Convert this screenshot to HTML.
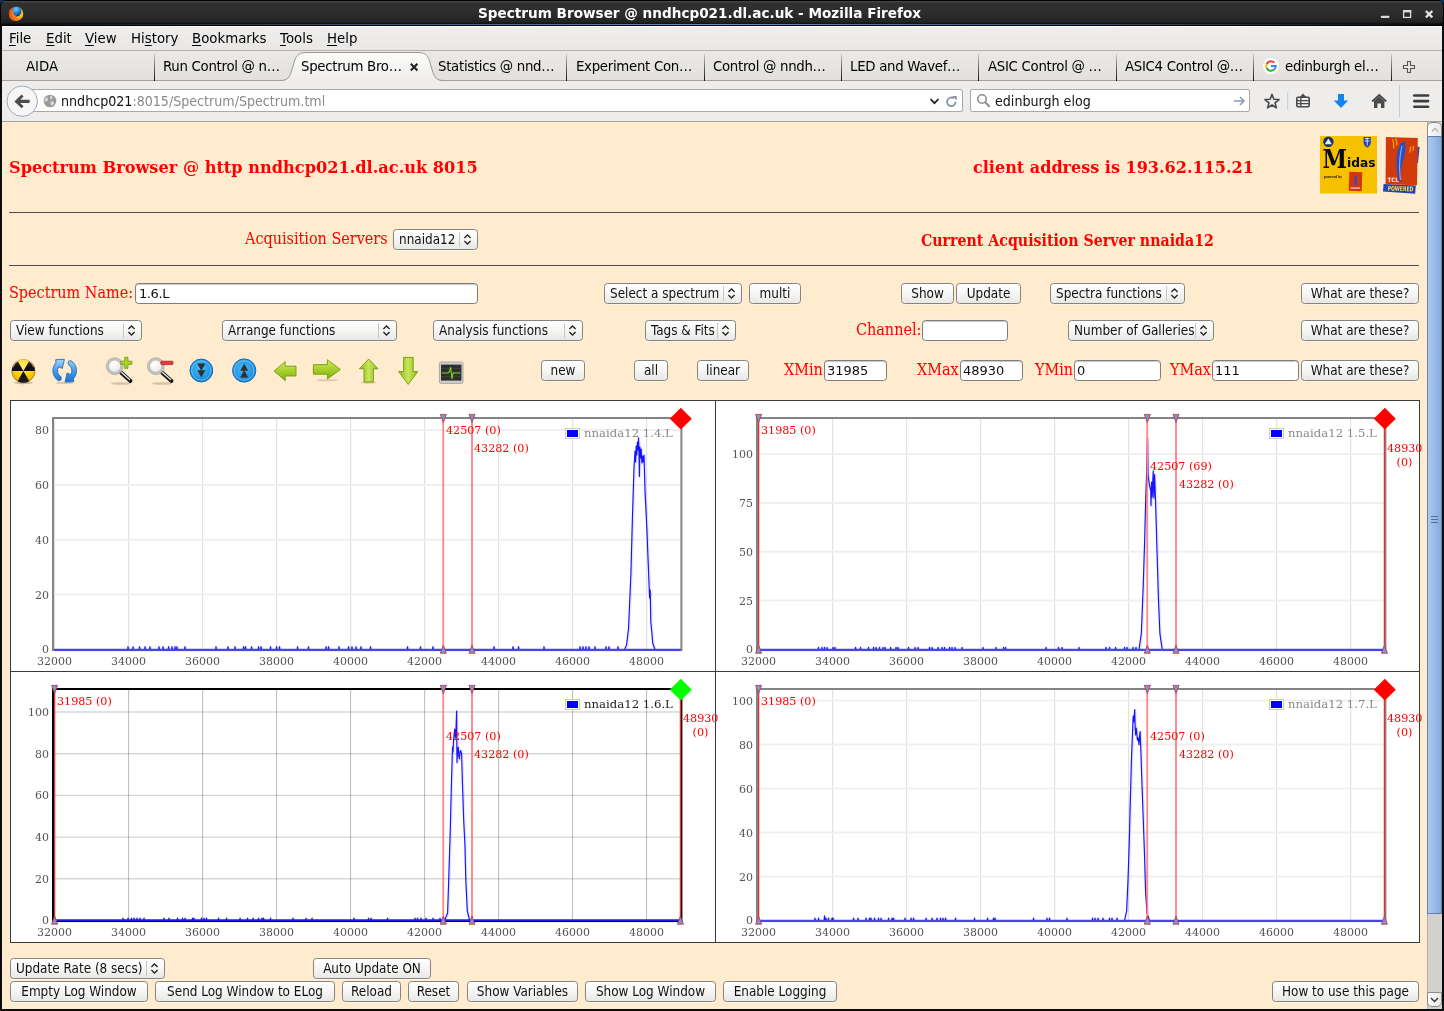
<!DOCTYPE html>
<html lang="en">
<head>
<meta charset="utf-8">
<title>Spectrum Browser @ nndhcp021.dl.ac.uk - Mozilla Firefox</title>
<style>
*{box-sizing:border-box;margin:0;padding:0}
html,body{width:1444px;height:1011px;overflow:hidden;background:#0d355f}
body{font-family:"DejaVu Sans","Liberation Sans",sans-serif;font-size:13.33px;color:#000;position:relative}
#win{position:absolute;left:0;top:0;width:1444px;height:1011px;background:#000;border-radius:6px 6px 0 0;overflow:hidden;will-change:transform}
#win *{position:absolute;white-space:nowrap}
#win u, #win b, #win i{position:static}
#titlebar{left:0;top:0;width:1444px;height:26px;background:linear-gradient(#000 0,#000 3%,#474747 5%,#303030 12%,#2e2e2e 50%,#222 85%,#0a0a0a 94%,#000 100%);border-radius:6px 6px 0 0;border-left:1px solid #000;border-right:1px solid #000}
#title{left:477px;top:4px;color:#fff;font-weight:bold;font-size:13.6px;line-height:18px}
#menubar{left:2px;top:26px;width:1440px;height:25px;background:linear-gradient(#efeeed,#e8e7e5);border-bottom:1px solid #b4b1ac;border-top:1px solid #f9f9f8}
.mi{top:3px;font-size:13.33px;line-height:18px}
.mi u{text-decoration:underline;text-underline-offset:1.5px}
#tabbar{left:2px;top:51px;width:1440px;height:30px;background:linear-gradient(#eae9e7,#e3e1de);border-bottom:1px solid #a5a29d}
.tab{top:7px;font-size:13.33px;line-height:18px;letter-spacing:-0.3px}
.tsep{top:3px;width:1px;height:27px;background:linear-gradient(#cfcdc9 0,#777 40%,#111 100%)}
#navbar{left:2px;top:81px;width:1440px;height:41px;background:#eeedec;border-bottom:1px solid #a5a29d}
.ubox{top:8px;height:23px;background:#fff;border:1px solid #a9a9a9;border-radius:2px}
.utxt{font-family:"DejaVu Sans Condensed","DejaVu Sans","Liberation Sans",sans-serif;font-size:14.1px;line-height:21px;top:1px}

#content{left:2px;top:122px;width:1425px;height:887px;background:#ffebcd}
.pf{font-family:"DejaVu Serif Condensed","DejaVu Serif","Liberation Serif",serif;color:#f00;font-size:16px;line-height:20px}
.pb{font-family:"DejaVu Serif","Liberation Serif",serif;color:#f00;font-size:16px;line-height:20px;font-weight:bold}
.ui{font-family:"DejaVu Sans Condensed","DejaVu Sans","Liberation Sans",sans-serif;font-size:13.4px;line-height:19px;color:#111}
.btn{height:21px;border:1px solid #86847f;border-radius:3.5px;background:linear-gradient(#ffffff 0,#f7f7f6 45%,#e9e8e6 100%);text-align:center;box-shadow:0 1px 0 rgba(255,255,255,.5)}
.sel{height:21px;border:1px solid #86847f;border-radius:3.5px;background:linear-gradient(#ffffff 0,#f7f7f6 45%,#e9e8e6 100%);padding-left:5px;box-shadow:0 1px 0 rgba(255,255,255,.5)}
.sel .sp{right:17px;top:2px;width:1px;height:15px;background:#c9c7c3}
.sel svg{right:4px;top:3px}
.inp{height:21px;border:1px solid #7f7d79;border-radius:3.5px;background:#fff;padding-left:2px;box-shadow:inset 0 1px 1px #c8c8c8;font-family:'DejaVu Sans','Liberation Sans',sans-serif !important;font-size:13px !important}
.hr{left:9px;width:1410px;height:1px;background:#4a4e57}

.tk{font-family:"DejaVu Serif","Liberation Serif",serif;font-size:11px;line-height:13px;color:#545454}
.ml{font-family:"DejaVu Serif","Liberation Serif",serif;font-size:11.15px;line-height:13px;color:#f00}
.lg{font-family:"DejaVu Serif","Liberation Serif",serif;font-size:11.7px;line-height:14px;color:#8a8a8a}
</style>
</head>
<body>
<div id="win">
<div id="titlebar"><div id="title">Spectrum Browser @ nndhcp021.dl.ac.uk - Mozilla Firefox</div>
<svg style="left:6.500px;top:6px" width="16" height="16" viewBox="0 0 16 16">
<defs><radialGradient id="fxg" cx="0.78" cy="0.42" r="0.85"><stop offset="0" stop-color="#fff36a"/><stop offset="0.250" stop-color="#ffc21a"/><stop offset="0.550" stop-color="#f58220"/><stop offset="1" stop-color="#dc3b12"/></radialGradient>
<radialGradient id="fxb" cx="0.45" cy="0.25" r="0.75"><stop offset="0" stop-color="#6fd0ff"/><stop offset="0.500" stop-color="#1d86d8"/><stop offset="1" stop-color="#122a80"/></radialGradient></defs>
<circle cx="8.050" cy="7.900" r="7.200" fill="url(#fxg)"/>
<circle cx="8.500" cy="5.700" r="5" fill="url(#fxb)"/>
<path d="M0.900 7.600 C0.900 5.200 1.400 3.600 2.200 2.600 L2.700 3.800 L3.800 3.200 L4.200 4.200 L5.600 3.900 C4.900 4.500 4.800 5.200 5.200 5.700 L6.800 5.700 C6 6.300 5.200 6.900 5.400 7.700 C5.800 8.900 7.200 8.900 8.600 8.600 C8 9.600 6.800 9.900 5.800 9.600 C6.800 11 9 11.200 10.800 10.200 C12.400 9.200 13.300 7.600 13.200 5.800 C14 7.400 13.800 9.600 12.800 11.400 C11 14.400 7.400 15.600 4.400 14.200 C2 13 0.900 10.400 0.900 7.600Z" fill="url(#fxg)"/>
</svg>
<svg style="left:1377px;top:6px" width="60" height="16" viewBox="0 0 60 16">
<rect x="3" y="9.700" width="8.300" height="2.400" rx="0.600" fill="#dcdcdc"/>
<rect x="25.600" y="4.700" width="7" height="6.700" fill="none" stroke="#dcdcdc" stroke-width="1.300"/><rect x="25" y="4.100" width="8.200" height="2.300" fill="#dcdcdc"/>
<path d="M47.900 5 L54.300 11.400 M54.300 5 L47.900 11.400" stroke="#e2e2e2" stroke-width="2.300" stroke-linecap="butt"/>
</svg>
<div style="left:1px;top:23.500px;width:1440px;height:1.500px;background:linear-gradient(90deg,rgba(106,143,192,0) 0,rgba(106,143,192,.55) 25%,#6a8fc0 50%,rgba(106,143,192,.55) 75%,rgba(106,143,192,0) 100%)"></div>
</div>
<div id="menubar">
<span class="mi" style="left:7px"><u>F</u>ile</span>
<span class="mi" style="left:44px"><u>E</u>dit</span>
<span class="mi" style="left:83px"><u>V</u>iew</span>
<span class="mi" style="left:129px">Hi<u>s</u>tory</span>
<span class="mi" style="left:190px"><u>B</u>ookmarks</span>
<span class="mi" style="left:278px"><u>T</u>ools</span>
<span class="mi" style="left:325px"><u>H</u>elp</span>
</div>
<div id="tabbar">
<span class="tab" style="left:24px;letter-spacing:0">AIDA</span>
<span class="tab" style="left:161px">Run Control @ n…</span>
<span class="tab" style="left:299px">Spectrum Bro…</span>
<span class="tab" style="left:436px">Statistics @ nnd…</span>
<span class="tab" style="left:574px">Experiment Con…</span>
<span class="tab" style="left:711px">Control @ nndh…</span>
<span class="tab" style="left:848px">LED and Wavef…</span>
<span class="tab" style="left:986px">ASIC Control @ …</span>
<span class="tab" style="left:1123px">ASIC4 Control @…</span>
<span class="tab" style="left:1283px">edinburgh el…</span>
<div class="tsep" style="left:152px"></div>
<div class="tsep" style="left:564px"></div>
<div class="tsep" style="left:702px"></div>
<div class="tsep" style="left:839px"></div>
<div class="tsep" style="left:976px"></div>
<div class="tsep" style="left:1114px"></div>
<div class="tsep" style="left:1251px"></div>
<div class="tsep" style="left:1389px"></div>
<svg style="left:278px;top:0" width="164" height="31" viewBox="0 0 164 31">
<defs><linearGradient id="tg" x1="0" y1="0" x2="0" y2="1"><stop offset="0" stop-color="#fbfbfa"/><stop offset="1" stop-color="#eeedec"/></linearGradient></defs>
<path d="M0 30 C8 30 9.500 26 11.500 20 L14.500 10 C16.500 3.500 20 1.500 26 1.500 L138 1.500 C144 1.500 147.500 3.500 149.500 10 L152.500 20 C154.500 26 156 30 164 30 L164 31 L0 31Z" fill="url(#tg)"/>
<path d="M0 29.500 C8 29.500 9.500 26 11.500 20 L14.500 10 C16.500 3.500 20 1.500 26 1.500 L138 1.500 C144 1.500 147.500 3.500 149.500 10 L152.500 20 C154.500 26 156 29.500 164 29.500" fill="none" stroke="#9b9995" stroke-width="1"/>
</svg>
<span class="tab" style="left:299px">Spectrum Bro…</span>
<svg style="left:407px;top:11px" width="10" height="10" viewBox="0 0 10 10"><path d="M1.800 1.800 L8.400 8.400 M8.400 1.800 L1.800 8.400" stroke="#222" stroke-width="2.100"/></svg>
<svg style="left:1261px;top:7px" width="16" height="16" viewBox="0 0 16 16"><circle cx="8" cy="8" r="8" fill="#fff"/>
<path d="M8 3.2 A4.8 4.8 0 0 0 3.7 6 " fill="none" stroke="#ea4335" stroke-width="2"/>
<path d="M3.7 6 A4.8 4.8 0 0 0 3.7 10" fill="none" stroke="#fbbc05" stroke-width="2"/>
<path d="M3.7 10 A4.8 4.8 0 0 0 11.2 11.6" fill="none" stroke="#34a853" stroke-width="2"/>
<path d="M11.2 11.6 A4.8 4.8 0 0 0 12.8 8 L8 8" fill="none" stroke="#4285f4" stroke-width="2"/>
<path d="M8 3.2 A4.8 4.8 0 0 1 11.4 4.6" fill="none" stroke="#ea4335" stroke-width="2"/></svg>
<svg style="left:1400px;top:9px" width="14" height="14" viewBox="0 0 14 14"><path d="M5.5 1.5 h3 v4 h4 v3 h-4 v4 h-3 v-4 h-4 v-3 h4z" fill="#e9e8e6" stroke="#555" stroke-width="1.1"/></svg>
</div>
<div id="navbar">
<div class="ubox" style="left:22px;width:939px"><span class="utxt" style="left:36px;color:#111">nndhcp021<span style="position:static;color:#8a8a8a">:8015/Spectrum/Spectrum.tml</span></span>
<svg style="left:18px;top:4px" width="14" height="14" viewBox="0 0 14 14"><circle cx="7" cy="7" r="6.3" fill="#9a9a9a"/><path d="M3 3.5 C4.5 3 5.5 4.5 5 6 C4.5 7.5 3 7 2 8 C1.2 6.5 1.6 4.6 3 3.5Z M7.5 1.5 C9.5 2 10 4 9 5 C8 5.6 7 4.6 7 3.4Z M8 7.5 C9.6 7 11.4 8 11 9.6 C10.4 11 9 12 8 11 C7.4 10 7.2 8.4 8 7.5Z" fill="#d7d7d7"/></svg>
<svg style="left:903px;top:5px" width="32" height="13" viewBox="0 0 32 13"><path d="M2.5 4 L6.5 8.2 L10.5 4" fill="none" stroke="#222" stroke-width="1.8"/>
<path d="M27.6 6.8 A4.3 4.3 0 1 1 25.6 3.2" fill="none" stroke="#8393a5" stroke-width="1.8"/><path d="M24.2 1 L28.6 1 L28.6 5.4Z" fill="#8393a5"/></svg>
</div>
<svg style="left:4px;top:4px" width="33" height="33" viewBox="0 0 33 33"><circle cx="16.2" cy="16.2" r="15.2" fill="#f6f6f6" stroke="#9aa8bd" stroke-width="1"/>
<path d="M8.4 16.4 L15.6 9.6 L17.6 11.6 L14.2 14.8 L23.6 14.8 L23.6 18 L14.2 18 L17.6 21.2 L15.6 23.2Z" fill="#4d4d4d"/></svg>
<div class="ubox" style="left:968px;width:280px"><span class="utxt" style="left:24px;color:#111">edinburgh elog</span>
<svg style="left:5px;top:3px" width="16" height="16" viewBox="0 0 16 16"><circle cx="6" cy="6" r="4.2" fill="none" stroke="#8d8d8d" stroke-width="1.6"/><path d="M9.2 9.2 L13.6 13.8" stroke="#8d8d8d" stroke-width="2"/></svg>
<svg style="left:262px;top:5px" width="13" height="12" viewBox="0 0 13 12"><path d="M1 6 H11 M7 2 L11 6 L7 10" fill="none" stroke="#8b9bb0" stroke-width="1.6"/></svg>
</div>
<svg style="left:1258px;top:8px;overflow:visible" width="180" height="26" viewBox="0 0 180 26">
<path d="M12.00 5.40 L13.88 10.21 L19.04 10.51 L15.04 13.79 L16.35 18.79 L12.00 16.00 L7.65 18.79 L8.96 13.79 L4.96 10.51 L10.12 10.21Z" fill="none" stroke="#4a4a4a" stroke-width="1.600" stroke-linejoin="round"/>
<rect x="27.2" y="3" width="1" height="18" fill="#c4cbd6"/>
<path d="M38 8.300 h10 a1.200 1.200 0 0 1 1.200 1.200 v7 a1.200 1.200 0 0 1 -1.200 1.200 h-10 a1.200 1.200 0 0 1 -1.200 -1.200 v-7 a1.200 1.200 0 0 1 1.200 -1.200z" fill="none" stroke="#4a4a4a" stroke-width="1.600"/>
<path d="M39.800 8 L43 4.600 L46.200 8Z" fill="#4a4a4a"/><path d="M37 11.600 H49 M37 14.700 H49 M40.800 9 V17.600" stroke="#4a4a4a" stroke-width="1.300"/>
<path d="M78 5.100 h6 v6.400 h4.200 L81 18.900 L73.800 11.500 h4.200z" fill="#1483f0"/>
<path d="M112.200 12.400 L119.200 6 L126.200 12.400" fill="none" stroke="#4a4a4a" stroke-width="2"/><path d="M114 12.200 L119.200 7.600 L124.400 12.200 V18.900 H121 V14.400 H117.400 V18.900 H114Z" fill="#4a4a4a"/>
<rect x="139" y="-4" width="1" height="32" fill="#c4cbd6"/>
<rect x="153" y="5.200" width="16.400" height="2.600" rx="1.300" fill="#3d3d3d"/><rect x="153" y="10.800" width="16.400" height="2.600" rx="1.300" fill="#3d3d3d"/><rect x="153" y="16.400" width="16.400" height="2.600" rx="1.300" fill="#3d3d3d"/>
</svg>
</div>
<div id="content"></div>
<span class="pb" style="left:9px;top:158px;font-size:16.17px">Spectrum Browser @ http nndhcp021.dl.ac.uk 8015</span>
<span class="pb" style="left:973px;top:158px;font-size:16.05px">client address is 193.62.115.21</span>
<div class="hr" style="top:212px"></div>
<span class="pf" style="left:245px;top:229px;">Acquisition Servers</span>
<div class="sel ui" style="left:393px;top:229px;width:85px">nnaida12<div class="sp"></div><svg width="11" height="13" viewBox="0 0 11 13"><path d="M2.4 5 L5.5 2 L8.600 5 M2.4 8 L5.5 11 L8.600 8" fill="none" stroke="#222" stroke-width="1.3"/></svg></div>
<span class="pb" style="left:921px;top:230.5px;font-family:'DejaVu Serif Condensed','DejaVu Serif',serif;font-size:15.75px">Current Acquisition Server nnaida12</span>
<div class="hr" style="top:265px"></div>
<span class="pf" style="left:9px;top:283px;">Spectrum Name:</span>
<div class="inp ui" style="left:135px;top:283px;width:343px"><span style="position:static;letter-spacing:-0.4px;padding-left:1px">1.6.L</span></div>
<div class="sel ui" style="left:604px;top:283px;width:138px">Select a spectrum<div class="sp"></div><svg width="11" height="13" viewBox="0 0 11 13"><path d="M2.4 5 L5.5 2 L8.600 5 M2.4 8 L5.5 11 L8.600 8" fill="none" stroke="#222" stroke-width="1.3"/></svg></div>
<div class="btn ui" style="left:749px;top:283px;width:52px">multi</div>
<div class="btn ui" style="left:901px;top:283px;width:53px">Show</div>
<div class="btn ui" style="left:956px;top:283px;width:65px">Update</div>
<div class="sel ui" style="left:1050px;top:283px;width:135px">Spectra functions<div class="sp"></div><svg width="11" height="13" viewBox="0 0 11 13"><path d="M2.4 5 L5.5 2 L8.600 5 M2.4 8 L5.5 11 L8.600 8" fill="none" stroke="#222" stroke-width="1.3"/></svg></div>
<div class="btn ui" style="left:1301px;top:283px;width:118px">What are these?</div>
<div class="sel ui" style="left:10px;top:320px;width:132px">View functions<div class="sp"></div><svg width="11" height="13" viewBox="0 0 11 13"><path d="M2.4 5 L5.5 2 L8.600 5 M2.4 8 L5.5 11 L8.600 8" fill="none" stroke="#222" stroke-width="1.3"/></svg></div>
<div class="sel ui" style="left:222px;top:320px;width:175px">Arrange functions<div class="sp"></div><svg width="11" height="13" viewBox="0 0 11 13"><path d="M2.4 5 L5.5 2 L8.600 5 M2.4 8 L5.5 11 L8.600 8" fill="none" stroke="#222" stroke-width="1.3"/></svg></div>
<div class="sel ui" style="left:433px;top:320px;width:150px">Analysis functions<div class="sp"></div><svg width="11" height="13" viewBox="0 0 11 13"><path d="M2.4 5 L5.5 2 L8.600 5 M2.4 8 L5.5 11 L8.600 8" fill="none" stroke="#222" stroke-width="1.3"/></svg></div>
<div class="sel ui" style="left:645px;top:320px;width:91px">Tags &amp; Fits<div class="sp"></div><svg width="11" height="13" viewBox="0 0 11 13"><path d="M2.4 5 L5.5 2 L8.600 5 M2.4 8 L5.5 11 L8.600 8" fill="none" stroke="#222" stroke-width="1.3"/></svg></div>
<span class="pf" style="left:856px;top:320px;">Channel:</span>
<div class="inp ui" style="left:922px;top:320px;width:86px"></div>
<div class="sel ui" style="left:1068px;top:320px;width:146px">Number of Galleries<div class="sp"></div><svg width="11" height="13" viewBox="0 0 11 13"><path d="M2.4 5 L5.5 2 L8.600 5 M2.4 8 L5.5 11 L8.600 8" fill="none" stroke="#222" stroke-width="1.3"/></svg></div>
<div class="btn ui" style="left:1301px;top:320px;width:118px">What are these?</div>
<div class="btn ui" style="left:541px;top:360px;width:44px">new</div>
<div class="btn ui" style="left:634px;top:360px;width:34px">all</div>
<div class="btn ui" style="left:697px;top:360px;width:52px">linear</div>
<span class="pf" style="left:784px;top:360px;">XMin</span>
<div class="inp ui" style="left:824px;top:360px;width:63px">31985</div>
<span class="pf" style="left:917px;top:360px;">XMax</span>
<div class="inp ui" style="left:960px;top:360px;width:63px">48930</div>
<span class="pf" style="left:1035px;top:360px;">YMin</span>
<div class="inp ui" style="left:1074px;top:360px;width:87px">0</div>
<span class="pf" style="left:1170px;top:360px;">YMax</span>
<div class="inp ui" style="left:1212px;top:360px;width:87px">111</div>
<div class="btn ui" style="left:1301px;top:360px;width:118px">What are these?</div>
<div class="sel ui" style="left:10px;top:958px;width:155px">Update Rate (8 secs)<div class="sp"></div><svg width="11" height="13" viewBox="0 0 11 13"><path d="M2.4 5 L5.5 2 L8.600 5 M2.4 8 L5.5 11 L8.600 8" fill="none" stroke="#222" stroke-width="1.3"/></svg></div>
<div class="btn ui" style="left:313px;top:958px;width:118px">Auto Update ON</div>
<div class="btn ui" style="left:10px;top:981px;width:138px">Empty Log Window</div>
<div class="btn ui" style="left:155px;top:981px;width:180px">Send Log Window to ELog</div>
<div class="btn ui" style="left:342px;top:981px;width:59px">Reload</div>
<div class="btn ui" style="left:408px;top:981px;width:51px">Reset</div>
<div class="btn ui" style="left:467px;top:981px;width:111px">Show Variables</div>
<div class="btn ui" style="left:585px;top:981px;width:131px">Show Log Window</div>
<div class="btn ui" style="left:723px;top:981px;width:114px">Enable Logging</div>
<div class="btn ui" style="left:1272px;top:981px;width:147px">How to use this page</div>
<div style="left:1427px;top:122px;width:15px;height:887px;background:#d4d2ce;border-left:1px solid #b0aeaa"></div>
<div style="left:1427px;top:122px;width:15px;height:15px;background:linear-gradient(90deg,#fdfdfd,#e9e8e6);border:1px solid #8f8d89;border-radius:5px 5px 0 0"><svg style="left:3px;top:4px" width="8" height="6" viewBox="0 0 8 6"><path d="M0.800 4.600 L4 1.400 L7.200 4.600" fill="none" stroke="#aaa" stroke-width="1.100"/></svg></div>
<div style="left:1427px;top:136px;width:15px;height:778px;background:linear-gradient(90deg,#b4cdf0 0,#a6c3ea 12%,#9cbbe5 50%,#86a9da 100%);border:1px solid #5b80b8"><svg style="left:3px;top:378px" width="7" height="9" viewBox="0 0 7 9"><path d="M0 1.500 H7 M0 4.500 H7 M0 7.500 H7" stroke="#4a6fa8" stroke-width="1"/></svg></div>
<div style="left:1427px;top:992px;width:15px;height:15px;background:linear-gradient(90deg,#fdfdfd,#e9e8e6);border:1px solid #8f8d89;border-radius:0 0 5px 5px"><svg style="left:2px;top:4px" width="9" height="6" viewBox="0 0 9 6"><path d="M1 1 L4.500 4.500 L8 1" fill="none" stroke="#333" stroke-width="1.400"/></svg></div>
<svg style="left:8px;top:355px" width="460" height="32" viewBox="8 355 460 32">
<defs>
<linearGradient id="radK" gradientUnits="userSpaceOnUse" x1="0" y1="359" x2="0" y2="383"><stop offset="0" stop-color="#3a3a3a"/><stop offset="0.350" stop-color="#0c0c0c"/><stop offset="1" stop-color="#1c1c1c"/></linearGradient>
<radialGradient id="radY" cx="0.5" cy="0.3" r="0.8"><stop offset="0" stop-color="#fff27a"/><stop offset="0.5" stop-color="#ffd400"/><stop offset="1" stop-color="#d89a00"/></radialGradient>
<linearGradient id="blu" gradientUnits="userSpaceOnUse" x1="0" y1="359" x2="0" y2="383"><stop offset="0" stop-color="#a8d6f7"/><stop offset="0.450" stop-color="#4fa0e6"/><stop offset="1" stop-color="#156ccc"/></linearGradient>
<radialGradient id="bluc" cx="0.45" cy="0.4" r="0.7"><stop offset="0" stop-color="#4fb8f2"/><stop offset="0.700" stop-color="#1a93e4"/><stop offset="1" stop-color="#1277cc"/></radialGradient>
<linearGradient id="grn" x1="0" y1="0" x2="0" y2="1"><stop offset="0" stop-color="#d3ea6a"/><stop offset="0.5" stop-color="#a6cf2c"/><stop offset="1" stop-color="#7fb20e"/></linearGradient>
<linearGradient id="grnh" x1="0" y1="0" x2="1" y2="0"><stop offset="0" stop-color="#8cbc14"/><stop offset="0.5" stop-color="#c9e45c"/><stop offset="1" stop-color="#8cbc14"/></linearGradient>
<radialGradient id="lens" cx="0.4" cy="0.35" r="0.7"><stop offset="0" stop-color="#ffffff"/><stop offset="0.7" stop-color="#f1ecec"/><stop offset="1" stop-color="#d9d4d4"/></radialGradient>
</defs>
<!-- radiation -->
<ellipse cx="23.400" cy="382.800" rx="9.500" ry="1.500" fill="rgba(90,70,40,.3)"/>
<circle cx="23.4" cy="371.1" r="11.6" fill="url(#radY)"/>
<path d="M23.4 371.1 L29.20 361.05 A11.6 11.6 0 0 1 35.00 371.10Z" fill="url(#radK)"/>
<path d="M23.4 371.1 L11.80 371.10 A11.6 11.6 0 0 1 17.60 361.05Z" fill="url(#radK)"/>
<path d="M23.4 371.1 L29.20 381.15 A11.6 11.6 0 0 1 17.60 381.15Z" fill="url(#radK)"/>
<circle cx="23.4" cy="371.1" r="11.6" fill="none" stroke="rgba(60,40,0,.55)" stroke-width="0.700"/>
<path d="M13.06 367.34 A11.0 11.0 0 0 1 33.74 367.34" fill="none" stroke="rgba(255,235,200,.7)" stroke-width="0.900"/>
<!-- refresh -->
<ellipse cx="65" cy="382.900" rx="9" ry="1.200" fill="rgba(90,70,40,.22)"/>
<path d="M60.84 380.25 L58.45 380.71 A11.8 11.8 0 0 1 55.93 362.80 L55.70 359.70 L64.40 359.30 L62.30 368.40 L58.66 366.78 A7.2 7.2 0 0 0 61.32 377.06Z" fill="url(#blu)" stroke="#1f6fc6" stroke-width="0.900" stroke-linejoin="round"/>
<path d="M68.56 361.15 L70.95 360.69 A11.8 11.8 0 0 1 73.47 378.60 L73.70 381.70 L65.00 382.10 L67.10 373.00 L70.74 374.62 A7.2 7.2 0 0 0 68.08 364.34Z" fill="url(#blu)" stroke="#1f6fc6" stroke-width="0.900" stroke-linejoin="round"/>
<!-- zoom in -->
<ellipse cx="121" cy="383.500" rx="10" ry="1.300" fill="rgba(90,70,40,.25)"/>
<path d="M121 372.500 L130.500 381" stroke="#151515" stroke-width="3.800" stroke-linecap="round"/><path d="M121.600 372.400 L129.600 379.600" stroke="#e8e8e8" stroke-width="1.300" stroke-linecap="round"/>
<circle cx="114.700" cy="366.200" r="7.300" fill="url(#lens)" stroke="#c2c2c2" stroke-width="2.400"/>
<circle cx="114.700" cy="366.200" r="8.500" fill="none" stroke="#9a9a9a" stroke-width="0.500"/><circle cx="114.700" cy="366.200" r="6.100" fill="none" stroke="#a8a8a8" stroke-width="0.500"/>
<path d="M124.700 357.200 h3.200 v4 h4 v3.200 h-4 v4 h-3.200 v-4 h-4 v-3.200 h4z" fill="#a9d326" stroke="#6c9c0c" stroke-width="0.800"/>
<!-- zoom out -->
<ellipse cx="162" cy="383.500" rx="10" ry="1.300" fill="rgba(90,70,40,.25)"/>
<path d="M162 372.500 L171.500 381" stroke="#151515" stroke-width="3.800" stroke-linecap="round"/><path d="M162.600 372.400 L170.600 379.600" stroke="#e8e8e8" stroke-width="1.300" stroke-linecap="round"/>
<circle cx="155.800" cy="366.200" r="7.300" fill="url(#lens)" stroke="#c2c2c2" stroke-width="2.400"/>
<circle cx="155.800" cy="366.200" r="8.500" fill="none" stroke="#9a9a9a" stroke-width="0.500"/><circle cx="155.800" cy="366.200" r="6.100" fill="none" stroke="#a8a8a8" stroke-width="0.500"/>
<rect x="160.800" y="361.200" width="12.200" height="3.400" rx="0.800" fill="#e0393e" stroke="#b01c22" stroke-width="0.700"/>
<!-- blue down -->
<circle cx="201.300" cy="370.500" r="11.400" fill="url(#bluc)" stroke="#1767b4" stroke-width="1"/>
<circle cx="201.300" cy="370.500" r="9.600" fill="none" stroke="rgba(200,235,255,.45)" stroke-width="0.900"/>
<path d="M197.300 363.600 h8 L201.300 371Z M197.300 370.200 h8 L201.300 377.600Z" fill="#303030"/>
<!-- blue up -->
<circle cx="244.200" cy="370.500" r="11.600" fill="url(#bluc)" stroke="#1767b4" stroke-width="1"/>
<circle cx="244.200" cy="370.500" r="9.800" fill="none" stroke="rgba(200,235,255,.45)" stroke-width="0.900"/>
<path d="M240.200 370.800 h8 L244.200 363.400Z M240.200 377.400 h8 L244.200 370Z" fill="#303030"/>
<!-- left arrow -->
<path d="M274 371 L285.200 361.600 L285.200 366.200 L296 366.200 L296 376 L285.200 376 L285.200 380.600Z" fill="url(#grn)" stroke="#6f9c0c" stroke-width="0.900" stroke-linejoin="round"/>
<!-- right arrow -->
<ellipse cx="327" cy="380.300" rx="11" ry="1" fill="rgba(90,70,40,.2)"/>
<path d="M340.400 369.400 L327.400 359.800 L327.400 364.600 L313.400 364.600 L313.400 374.200 L327.400 374.200 L327.400 379Z" fill="url(#grn)" stroke="#6f9c0c" stroke-width="0.900" stroke-linejoin="round"/>
<!-- up arrow -->
<ellipse cx="368.700" cy="382.600" rx="8" ry="1" fill="rgba(90,70,40,.25)"/>
<path d="M368.700 359 L378 368.800 L373.400 368.800 L373.400 382 L364 382 L364 368.800 L359.400 368.800Z" fill="url(#grnh)" stroke="#6f9c0c" stroke-width="0.900" stroke-linejoin="round"/>
<!-- down arrow -->
<path d="M408.200 384.400 L417.800 371.600 L413.200 371.600 L413.200 357.400 L403.600 357.400 L403.600 371.600 L398.600 371.600Z" fill="url(#grnh)" stroke="#6f9c0c" stroke-width="0.900" stroke-linejoin="round"/>
<!-- monitor -->
<rect x="439.400" y="362" width="23.600" height="21.400" rx="1.500" fill="#cfcfcf" stroke="#9c9c9c" stroke-width="0.800"/>
<rect x="441" y="364.600" width="20.400" height="16" fill="#2e2e2e"/>
<path d="M441 368.600 H461.400 M441 372.600 H461.400 M441 376.600 H461.400" stroke="#4a4a4a" stroke-width="0.600"/>
<path d="M442 373 H448 L449.600 371.400 L450.600 367 L452 379 L453 373 H460.400" fill="none" stroke="#7ed321" stroke-width="1.100"/>
</svg>
<div style="left:10px;top:400px;width:1410px;height:543px;background:#fff;border:1px solid #3a3a3a"></div>
<div style="left:715px;top:400px;width:1px;height:543px;background:#3a3a3a"></div>
<div style="left:10px;top:671px;width:1410px;height:1px;background:#3a3a3a"></div>
<svg style="left:11px;top:401px" width="703" height="269" viewBox="11 401 703 269">
<path d="M54.6 419 V649" stroke="#e2e2e2" stroke-width="1.2"/>
<path d="M128.6 419 V649" stroke="#e2e2e2" stroke-width="1.2"/>
<path d="M202.6 419 V649" stroke="#e2e2e2" stroke-width="1.2"/>
<path d="M276.6 419 V649" stroke="#e2e2e2" stroke-width="1.2"/>
<path d="M350.6 419 V649" stroke="#e2e2e2" stroke-width="1.2"/>
<path d="M424.6 419 V649" stroke="#e2e2e2" stroke-width="1.2"/>
<path d="M498.6 419 V649" stroke="#e2e2e2" stroke-width="1.2"/>
<path d="M572.6 419 V649" stroke="#e2e2e2" stroke-width="1.2"/>
<path d="M646.6 419 V649" stroke="#e2e2e2" stroke-width="1.2"/>
<path d="M54 594.6 H680.4" stroke="#efefef" stroke-width="2"/>
<path d="M54 539.8 H680.4" stroke="#efefef" stroke-width="2"/>
<path d="M54 484.9 H680.4" stroke="#efefef" stroke-width="2"/>
<path d="M54 430.1 H680.4" stroke="#efefef" stroke-width="2"/>
<rect x="53" y="418" width="628.4" height="232" fill="none" stroke="#848484" stroke-width="2"/>
<path d="M54 649.5 L127.6 649.5 L128.0 646.7 L128.4 649.5 L132.6 649.5 L133.0 646.7 L133.4 649.5 L139.1 649.5 L139.5 646.7 L139.9 649.5 L144.6 649.5 L145.0 646.7 L145.4 649.5 L149.6 649.5 L150.0 646.7 L150.4 649.5 L158.6 649.5 L159.0 646.7 L159.4 649.5 L162.6 649.5 L163.0 646.7 L163.4 649.5 L168.1 649.5 L168.5 646.7 L168.9 649.5 L171.6 649.5 L172.0 646.7 L172.4 649.5 L174.6 649.5 L175.0 646.7 L175.4 649.5 L176.6 649.5 L177.0 646.7 L177.4 649.5 L184.6 649.5 L185.0 646.7 L185.4 649.5 L215.6 649.5 L216.0 646.7 L216.4 649.5 L227.6 649.5 L228.0 646.7 L228.4 649.5 L234.6 649.5 L235.0 646.7 L235.4 649.5 L243.1 649.5 L243.5 646.7 L243.9 649.5 L245.1 649.5 L245.5 646.7 L245.9 649.5 L251.1 649.5 L251.5 646.7 L251.9 649.5 L258.1 649.5 L258.5 646.7 L258.9 649.5 L260.6 649.5 L261.0 646.7 L261.4 649.5 L270.1 649.5 L270.5 646.7 L270.9 649.5 L276.1 649.5 L276.5 646.7 L276.9 649.5 L279.1 649.5 L279.5 646.7 L279.9 649.5 L297.1 649.5 L297.5 646.7 L297.9 649.5 L308.1 649.5 L308.5 646.7 L308.9 649.5 L325.6 649.5 L326.0 646.7 L326.4 649.5 L328.1 649.5 L328.5 646.7 L328.9 649.5 L338.6 649.5 L339.0 646.7 L339.4 649.5 L348.1 649.5 L348.5 646.7 L348.9 649.5 L351.6 649.5 L352.0 646.7 L352.4 649.5 L355.6 649.5 L356.0 646.7 L356.4 649.5 L360.6 649.5 L361.0 646.7 L361.4 649.5 L370.1 649.5 L370.5 646.7 L370.9 649.5 L407.1 649.5 L407.5 646.7 L407.9 649.5 L420.1 649.5 L420.5 646.7 L420.9 649.5 L432.6 649.5 L433.0 646.7 L433.4 649.5 L493.6 649.5 L494.0 646.7 L494.4 649.5 L512.6 649.5 L513.0 646.7 L513.4 649.5 L518.1 649.5 L518.5 646.7 L518.9 649.5 L543.6 649.5 L544.0 646.7 L544.4 649.5 L579.6 649.5 L580.0 646.7 L580.4 649.5 L582.6 649.5 L583.0 646.7 L583.4 649.5 L585.6 649.5 L586.0 646.7 L586.4 649.5 L588.6 649.5 L589.0 646.7 L589.4 649.5 L594.6 649.5 L595.0 646.7 L595.4 649.5 L605.6 649.5 L606.0 646.7 L606.4 649.5 L608.6 649.5 L609.0 646.7 L609.4 649.5 L617.6 649.5 L618.0 646.7 L618.4 649.5 L624.5 649.5 L626.5 645.0 L628.5 629.0 L630.9 574.0 L632.5 515.0 L634.0 467.5 L635.0 451.0 L635.6 462.0 L636.2 446.0 L636.8 455.0 L637.4 442.0 L638.0 450.0 L638.5 437.8 L639.0 452.0 L639.4 476.5 L639.9 447.0 L640.6 458.0 L641.2 449.0 L641.9 463.0 L642.6 456.0 L643.3 462.0 L644.0 455.0 L645.0 491.0 L646.8 527.0 L648.2 562.5 L649.6 598.0 L650.2 590.0 L650.8 622.0 L651.6 630.0 L652.7 643.0 L655.0 649.5 L680.4 649.5" fill="none" stroke="rgba(0,0,255,.10)" stroke-width="2.600" stroke-linejoin="round" transform="translate(0.6,0.8)"/>
<path d="M54 649.5 L127.6 649.5 L128.0 646.7 L128.4 649.5 L132.6 649.5 L133.0 646.7 L133.4 649.5 L139.1 649.5 L139.5 646.7 L139.9 649.5 L144.6 649.5 L145.0 646.7 L145.4 649.5 L149.6 649.5 L150.0 646.7 L150.4 649.5 L158.6 649.5 L159.0 646.7 L159.4 649.5 L162.6 649.5 L163.0 646.7 L163.4 649.5 L168.1 649.5 L168.5 646.7 L168.9 649.5 L171.6 649.5 L172.0 646.7 L172.4 649.5 L174.6 649.5 L175.0 646.7 L175.4 649.5 L176.6 649.5 L177.0 646.7 L177.4 649.5 L184.6 649.5 L185.0 646.7 L185.4 649.5 L215.6 649.5 L216.0 646.7 L216.4 649.5 L227.6 649.5 L228.0 646.7 L228.4 649.5 L234.6 649.5 L235.0 646.7 L235.4 649.5 L243.1 649.5 L243.5 646.7 L243.9 649.5 L245.1 649.5 L245.5 646.7 L245.9 649.5 L251.1 649.5 L251.5 646.7 L251.9 649.5 L258.1 649.5 L258.5 646.7 L258.9 649.5 L260.6 649.5 L261.0 646.7 L261.4 649.5 L270.1 649.5 L270.5 646.7 L270.9 649.5 L276.1 649.5 L276.5 646.7 L276.9 649.5 L279.1 649.5 L279.5 646.7 L279.9 649.5 L297.1 649.5 L297.5 646.7 L297.9 649.5 L308.1 649.5 L308.5 646.7 L308.9 649.5 L325.6 649.5 L326.0 646.7 L326.4 649.5 L328.1 649.5 L328.5 646.7 L328.9 649.5 L338.6 649.5 L339.0 646.7 L339.4 649.5 L348.1 649.5 L348.5 646.7 L348.9 649.5 L351.6 649.5 L352.0 646.7 L352.4 649.5 L355.6 649.5 L356.0 646.7 L356.4 649.5 L360.6 649.5 L361.0 646.7 L361.4 649.5 L370.1 649.5 L370.5 646.7 L370.9 649.5 L407.1 649.5 L407.5 646.7 L407.9 649.5 L420.1 649.5 L420.5 646.7 L420.9 649.5 L432.6 649.5 L433.0 646.7 L433.4 649.5 L493.6 649.5 L494.0 646.7 L494.4 649.5 L512.6 649.5 L513.0 646.7 L513.4 649.5 L518.1 649.5 L518.5 646.7 L518.9 649.5 L543.6 649.5 L544.0 646.7 L544.4 649.5 L579.6 649.5 L580.0 646.7 L580.4 649.5 L582.6 649.5 L583.0 646.7 L583.4 649.5 L585.6 649.5 L586.0 646.7 L586.4 649.5 L588.6 649.5 L589.0 646.7 L589.4 649.5 L594.6 649.5 L595.0 646.7 L595.4 649.5 L605.6 649.5 L606.0 646.7 L606.4 649.5 L608.6 649.5 L609.0 646.7 L609.4 649.5 L617.6 649.5 L618.0 646.7 L618.4 649.5 L624.5 649.5 L626.5 645.0 L628.5 629.0 L630.9 574.0 L632.5 515.0 L634.0 467.5 L635.0 451.0 L635.6 462.0 L636.2 446.0 L636.8 455.0 L637.4 442.0 L638.0 450.0 L638.5 437.8 L639.0 452.0 L639.4 476.5 L639.9 447.0 L640.6 458.0 L641.2 449.0 L641.9 463.0 L642.6 456.0 L643.3 462.0 L644.0 455.0 L645.0 491.0 L646.8 527.0 L648.2 562.5 L649.6 598.0 L650.2 590.0 L650.8 622.0 L651.6 630.0 L652.7 643.0 L655.0 649.5 L680.4 649.5" fill="none" stroke="#1414ff" stroke-width="1.150" stroke-linejoin="round"/>
<path d="M54 649.9 H680.4" stroke="#4545ea" stroke-width="2.300"/>
<path d="M443.3 418 V650" stroke="#ff5252" stroke-width="1.600"/>
<path d="M443.3 420 V648" stroke="#ffc4c4" stroke-width="0.600"/>
<path d="M440.3 414.4 h6 l-3 8z" fill="#6f9fd0" stroke="#d03048" stroke-width="0.9"/>
<path d="M440.3 653.2 h6 l-3 -8z" fill="#6f9fd0" stroke="#d03048" stroke-width="0.9"/>
<path d="M472.0 418 V650" stroke="#ff5252" stroke-width="1.600"/>
<path d="M472.0 420 V648" stroke="#ffc4c4" stroke-width="0.600"/>
<path d="M469.0 414.4 h6 l-3 8z" fill="#6f9fd0" stroke="#d03048" stroke-width="0.9"/>
<path d="M469.0 653.2 h6 l-3 -8z" fill="#6f9fd0" stroke="#d03048" stroke-width="0.9"/>
<path d="M669.8 418.7 L680.8 407.8 L691.8 418.7 L680.8 429.59999999999997Z" fill="#ff0000"/>
<rect x="565.5" y="428.5" width="14" height="10" fill="#fff" stroke="#ccc" stroke-width="1"/>
<rect x="567" y="430" width="11" height="7" fill="#0000ff"/>
</svg>
<span class="lg" style="left:584px;top:426px;color:#8a8a8a">nnaida12 1.4.L</span>
<span class="tk" style="left:0px;width:49px;text-align:right;top:642.5px">0</span>
<span class="tk" style="left:0px;width:49px;text-align:right;top:588.6px">20</span>
<span class="tk" style="left:0px;width:49px;text-align:right;top:533.8px">40</span>
<span class="tk" style="left:0px;width:49px;text-align:right;top:478.9px">60</span>
<span class="tk" style="left:0px;width:49px;text-align:right;top:424.1px">80</span>
<span class="tk" style="left:24.6px;width:60px;text-align:center;top:655px">32000</span>
<span class="tk" style="left:98.6px;width:60px;text-align:center;top:655px">34000</span>
<span class="tk" style="left:172.6px;width:60px;text-align:center;top:655px">36000</span>
<span class="tk" style="left:246.6px;width:60px;text-align:center;top:655px">38000</span>
<span class="tk" style="left:320.6px;width:60px;text-align:center;top:655px">40000</span>
<span class="tk" style="left:394.6px;width:60px;text-align:center;top:655px">42000</span>
<span class="tk" style="left:468.6px;width:60px;text-align:center;top:655px">44000</span>
<span class="tk" style="left:542.6px;width:60px;text-align:center;top:655px">46000</span>
<span class="tk" style="left:616.6px;width:60px;text-align:center;top:655px">48000</span>
<svg style="left:715px;top:401px" width="703" height="269" viewBox="715 401 703 269">
<path d="M758.6 419 V649" stroke="#e2e2e2" stroke-width="1.2"/>
<path d="M832.6 419 V649" stroke="#e2e2e2" stroke-width="1.2"/>
<path d="M906.6 419 V649" stroke="#e2e2e2" stroke-width="1.2"/>
<path d="M980.6 419 V649" stroke="#e2e2e2" stroke-width="1.2"/>
<path d="M1054.6 419 V649" stroke="#e2e2e2" stroke-width="1.2"/>
<path d="M1128.6 419 V649" stroke="#e2e2e2" stroke-width="1.2"/>
<path d="M1202.6 419 V649" stroke="#e2e2e2" stroke-width="1.2"/>
<path d="M1276.6 419 V649" stroke="#e2e2e2" stroke-width="1.2"/>
<path d="M1350.6 419 V649" stroke="#e2e2e2" stroke-width="1.2"/>
<path d="M758 600.6 H1384.4" stroke="#efefef" stroke-width="2"/>
<path d="M758 551.8 H1384.4" stroke="#efefef" stroke-width="2"/>
<path d="M758 502.9 H1384.4" stroke="#efefef" stroke-width="2"/>
<path d="M758 454.0 H1384.4" stroke="#efefef" stroke-width="2"/>
<rect x="757" y="418" width="628.4" height="232" fill="none" stroke="#848484" stroke-width="2"/>
<path d="M758 649.5 L818.1 649.5 L818.5 647.3 L818.9 649.5 L821.6 649.5 L822.0 647.3 L822.4 649.5 L824.1 649.5 L824.5 647.3 L824.9 649.5 L826.6 649.5 L827.0 647.3 L827.4 649.5 L832.6 649.5 L833.0 647.3 L833.4 649.5 L834.6 649.5 L835.0 647.3 L835.4 649.5 L855.1 649.5 L855.5 647.3 L855.9 649.5 L860.1 649.5 L860.5 647.3 L860.9 649.5 L868.1 649.5 L868.5 647.3 L868.9 649.5 L873.1 649.5 L873.5 647.3 L873.9 649.5 L875.6 649.5 L876.0 647.3 L876.4 649.5 L879.1 649.5 L879.5 647.3 L879.9 649.5 L882.6 649.5 L883.0 647.3 L883.4 649.5 L884.6 649.5 L885.0 647.3 L885.4 649.5 L890.1 649.5 L890.5 647.3 L890.9 649.5 L895.6 649.5 L896.0 647.3 L896.4 649.5 L897.6 649.5 L898.0 647.3 L898.4 649.5 L908.1 649.5 L908.5 647.3 L908.9 649.5 L914.6 649.5 L915.0 647.3 L915.4 649.5 L917.6 649.5 L918.0 647.3 L918.4 649.5 L929.1 649.5 L929.5 647.3 L929.9 649.5 L931.6 649.5 L932.0 647.3 L932.4 649.5 L937.6 649.5 L938.0 647.3 L938.4 649.5 L941.6 649.5 L942.0 647.3 L942.4 649.5 L944.1 649.5 L944.5 647.3 L944.9 649.5 L949.1 649.5 L949.5 647.3 L949.9 649.5 L951.6 649.5 L952.0 647.3 L952.4 649.5 L954.6 649.5 L955.0 647.3 L955.4 649.5 L961.6 649.5 L962.0 647.3 L962.4 649.5 L982.6 649.5 L983.0 647.3 L983.4 649.5 L995.6 649.5 L996.0 647.3 L996.4 649.5 L1003.1 649.5 L1003.5 647.3 L1003.9 649.5 L1005.1 649.5 L1005.5 647.3 L1005.9 649.5 L1045.6 649.5 L1046.0 647.3 L1046.4 649.5 L1058.1 649.5 L1058.5 647.3 L1058.9 649.5 L1061.6 649.5 L1062.0 647.3 L1062.4 649.5 L1078.6 649.5 L1079.0 647.3 L1079.4 649.5 L1105.6 649.5 L1106.0 647.3 L1106.4 649.5 L1109.1 649.5 L1109.5 647.3 L1109.9 649.5 L1115.1 649.5 L1115.5 647.3 L1115.9 649.5 L1124.1 649.5 L1124.5 647.3 L1124.9 649.5 L1126.6 649.5 L1127.0 647.3 L1127.4 649.5 L1132.6 649.5 L1133.0 647.3 L1133.4 649.5 L1135.6 649.5 L1136.0 647.3 L1136.4 649.5 L1139.0 649.5 L1141.3 633.7 L1143.2 586.0 L1144.7 538.7 L1145.6 503.0 L1146.8 467.5 L1147.5 437.8 L1148.0 474.6 L1149.4 485.0 L1150.8 491.0 L1151.0 505.5 L1151.6 482.0 L1152.2 497.0 L1153.2 471.0 L1153.9 498.0 L1154.6 474.6 L1155.6 503.0 L1157.0 550.6 L1158.4 598.0 L1159.9 633.7 L1162.2 649.5 L1384.4 649.5" fill="none" stroke="rgba(0,0,255,.10)" stroke-width="2.600" stroke-linejoin="round" transform="translate(0.6,0.8)"/>
<path d="M758 649.5 L818.1 649.5 L818.5 647.3 L818.9 649.5 L821.6 649.5 L822.0 647.3 L822.4 649.5 L824.1 649.5 L824.5 647.3 L824.9 649.5 L826.6 649.5 L827.0 647.3 L827.4 649.5 L832.6 649.5 L833.0 647.3 L833.4 649.5 L834.6 649.5 L835.0 647.3 L835.4 649.5 L855.1 649.5 L855.5 647.3 L855.9 649.5 L860.1 649.5 L860.5 647.3 L860.9 649.5 L868.1 649.5 L868.5 647.3 L868.9 649.5 L873.1 649.5 L873.5 647.3 L873.9 649.5 L875.6 649.5 L876.0 647.3 L876.4 649.5 L879.1 649.5 L879.5 647.3 L879.9 649.5 L882.6 649.5 L883.0 647.3 L883.4 649.5 L884.6 649.5 L885.0 647.3 L885.4 649.5 L890.1 649.5 L890.5 647.3 L890.9 649.5 L895.6 649.5 L896.0 647.3 L896.4 649.5 L897.6 649.5 L898.0 647.3 L898.4 649.5 L908.1 649.5 L908.5 647.3 L908.9 649.5 L914.6 649.5 L915.0 647.3 L915.4 649.5 L917.6 649.5 L918.0 647.3 L918.4 649.5 L929.1 649.5 L929.5 647.3 L929.9 649.5 L931.6 649.5 L932.0 647.3 L932.4 649.5 L937.6 649.5 L938.0 647.3 L938.4 649.5 L941.6 649.5 L942.0 647.3 L942.4 649.5 L944.1 649.5 L944.5 647.3 L944.9 649.5 L949.1 649.5 L949.5 647.3 L949.9 649.5 L951.6 649.5 L952.0 647.3 L952.4 649.5 L954.6 649.5 L955.0 647.3 L955.4 649.5 L961.6 649.5 L962.0 647.3 L962.4 649.5 L982.6 649.5 L983.0 647.3 L983.4 649.5 L995.6 649.5 L996.0 647.3 L996.4 649.5 L1003.1 649.5 L1003.5 647.3 L1003.9 649.5 L1005.1 649.5 L1005.5 647.3 L1005.9 649.5 L1045.6 649.5 L1046.0 647.3 L1046.4 649.5 L1058.1 649.5 L1058.5 647.3 L1058.9 649.5 L1061.6 649.5 L1062.0 647.3 L1062.4 649.5 L1078.6 649.5 L1079.0 647.3 L1079.4 649.5 L1105.6 649.5 L1106.0 647.3 L1106.4 649.5 L1109.1 649.5 L1109.5 647.3 L1109.9 649.5 L1115.1 649.5 L1115.5 647.3 L1115.9 649.5 L1124.1 649.5 L1124.5 647.3 L1124.9 649.5 L1126.6 649.5 L1127.0 647.3 L1127.4 649.5 L1132.6 649.5 L1133.0 647.3 L1133.4 649.5 L1135.6 649.5 L1136.0 647.3 L1136.4 649.5 L1139.0 649.5 L1141.3 633.7 L1143.2 586.0 L1144.7 538.7 L1145.6 503.0 L1146.8 467.5 L1147.5 437.8 L1148.0 474.6 L1149.4 485.0 L1150.8 491.0 L1151.0 505.5 L1151.6 482.0 L1152.2 497.0 L1153.2 471.0 L1153.9 498.0 L1154.6 474.6 L1155.6 503.0 L1157.0 550.6 L1158.4 598.0 L1159.9 633.7 L1162.2 649.5 L1384.4 649.5" fill="none" stroke="#1414ff" stroke-width="1.150" stroke-linejoin="round"/>
<path d="M758 649.9 H1384.4" stroke="#4545ea" stroke-width="2.300"/>
<path d="M758.6 418 V650" stroke="#f03030" stroke-width="1.300"/>
<path d="M755.6 414.4 h6 l-3 8z" fill="#6f9fd0" stroke="#d03048" stroke-width="0.9"/>
<path d="M755.6 653.2 h6 l-3 -8z" fill="#6f9fd0" stroke="#d03048" stroke-width="0.9"/>
<path d="M1147.3 418 V650" stroke="#ff5252" stroke-width="1.600"/>
<path d="M1147.3 420 V648" stroke="#ffc4c4" stroke-width="0.600"/>
<path d="M1144.3 414.4 h6 l-3 8z" fill="#6f9fd0" stroke="#d03048" stroke-width="0.9"/>
<path d="M1144.3 653.2 h6 l-3 -8z" fill="#6f9fd0" stroke="#d03048" stroke-width="0.9"/>
<path d="M1176.0 418 V650" stroke="#ff5252" stroke-width="1.600"/>
<path d="M1176.0 420 V648" stroke="#ffc4c4" stroke-width="0.600"/>
<path d="M1173.0 414.4 h6 l-3 8z" fill="#6f9fd0" stroke="#d03048" stroke-width="0.9"/>
<path d="M1173.0 653.2 h6 l-3 -8z" fill="#6f9fd0" stroke="#d03048" stroke-width="0.9"/>
<path d="M1384.4 418 V650" stroke="#f03030" stroke-width="1.300"/>
<path d="M1381.4 414.4 h6 l-3 8z" fill="#6f9fd0" stroke="#d03048" stroke-width="0.9"/>
<path d="M1381.4 653.2 h6 l-3 -8z" fill="#6f9fd0" stroke="#d03048" stroke-width="0.9"/>
<path d="M1373.8 418.7 L1384.8 407.8 L1395.8 418.7 L1384.8 429.59999999999997Z" fill="#ff0000"/>
<rect x="1269.5" y="428.5" width="14" height="10" fill="#fff" stroke="#ccc" stroke-width="1"/>
<rect x="1271" y="430" width="11" height="7" fill="#0000ff"/>
</svg>
<span class="lg" style="left:1288px;top:426px;color:#8a8a8a">nnaida12 1.5.L</span>
<span class="tk" style="left:704px;width:49px;text-align:right;top:642.5px">0</span>
<span class="tk" style="left:704px;width:49px;text-align:right;top:594.6px">25</span>
<span class="tk" style="left:704px;width:49px;text-align:right;top:545.8px">50</span>
<span class="tk" style="left:704px;width:49px;text-align:right;top:496.9px">75</span>
<span class="tk" style="left:704px;width:49px;text-align:right;top:448.0px">100</span>
<span class="tk" style="left:728.6px;width:60px;text-align:center;top:655px">32000</span>
<span class="tk" style="left:802.6px;width:60px;text-align:center;top:655px">34000</span>
<span class="tk" style="left:876.6px;width:60px;text-align:center;top:655px">36000</span>
<span class="tk" style="left:950.6px;width:60px;text-align:center;top:655px">38000</span>
<span class="tk" style="left:1024.6px;width:60px;text-align:center;top:655px">40000</span>
<span class="tk" style="left:1098.6px;width:60px;text-align:center;top:655px">42000</span>
<span class="tk" style="left:1172.6px;width:60px;text-align:center;top:655px">44000</span>
<span class="tk" style="left:1246.6px;width:60px;text-align:center;top:655px">46000</span>
<span class="tk" style="left:1320.6px;width:60px;text-align:center;top:655px">48000</span>
<svg style="left:11px;top:672px" width="703" height="269" viewBox="11 672 703 269">
<path d="M54.6 690 V920" stroke="rgba(0,0,0,.27)" stroke-width="1"/>
<path d="M128.6 690 V920" stroke="rgba(0,0,0,.27)" stroke-width="1"/>
<path d="M202.6 690 V920" stroke="rgba(0,0,0,.27)" stroke-width="1"/>
<path d="M276.6 690 V920" stroke="rgba(0,0,0,.27)" stroke-width="1"/>
<path d="M350.6 690 V920" stroke="rgba(0,0,0,.27)" stroke-width="1"/>
<path d="M424.6 690 V920" stroke="rgba(0,0,0,.27)" stroke-width="1"/>
<path d="M498.6 690 V920" stroke="rgba(0,0,0,.27)" stroke-width="1"/>
<path d="M572.6 690 V920" stroke="rgba(0,0,0,.27)" stroke-width="1"/>
<path d="M646.6 690 V920" stroke="rgba(0,0,0,.27)" stroke-width="1"/>
<path d="M54 878.8 H680.4" stroke="rgba(0,0,0,.16)" stroke-width="1.4"/>
<path d="M54 837.1 H680.4" stroke="rgba(0,0,0,.16)" stroke-width="1.4"/>
<path d="M54 795.4 H680.4" stroke="rgba(0,0,0,.16)" stroke-width="1.4"/>
<path d="M54 753.7 H680.4" stroke="rgba(0,0,0,.16)" stroke-width="1.4"/>
<path d="M54 712.0 H680.4" stroke="rgba(0,0,0,.16)" stroke-width="1.4"/>
<rect x="53" y="689" width="628.4" height="232" fill="none" stroke="#000000" stroke-width="2"/>
<path d="M54 920.5 L122.6 920.5 L123.0 918.1 L123.4 920.5 L127.6 920.5 L128.0 918.1 L128.4 920.5 L131.1 920.5 L131.5 918.1 L131.9 920.5 L133.6 920.5 L134.0 918.1 L134.4 920.5 L136.6 920.5 L137.0 918.1 L137.4 920.5 L139.6 920.5 L140.0 918.1 L140.4 920.5 L143.6 920.5 L144.0 918.1 L144.4 920.5 L163.6 920.5 L164.0 918.1 L164.4 920.5 L168.6 920.5 L169.0 918.1 L169.4 920.5 L177.1 920.5 L177.5 918.1 L177.9 920.5 L182.1 920.5 L182.5 918.1 L182.9 920.5 L184.6 920.5 L185.0 918.1 L185.4 920.5 L192.1 920.5 L192.5 918.1 L192.9 920.5 L193.6 920.5 L194.0 918.1 L194.4 920.5 L201.1 920.5 L201.5 918.1 L201.9 920.5 L203.6 920.5 L204.0 918.1 L204.4 920.5 L206.1 920.5 L206.5 918.1 L206.9 920.5 L218.1 920.5 L218.5 918.1 L218.9 920.5 L226.1 920.5 L226.5 918.1 L226.9 920.5 L239.6 920.5 L240.0 918.1 L240.4 920.5 L247.1 920.5 L247.5 918.1 L247.9 920.5 L252.6 920.5 L253.0 918.1 L253.4 920.5 L258.1 920.5 L258.5 918.1 L258.9 920.5 L261.6 920.5 L262.0 918.1 L262.4 920.5 L263.1 920.5 L263.5 918.1 L263.9 920.5 L270.1 920.5 L270.5 918.1 L270.9 920.5 L292.6 920.5 L293.0 918.1 L293.4 920.5 L305.6 920.5 L306.0 918.1 L306.4 920.5 L311.6 920.5 L312.0 918.1 L312.4 920.5 L353.6 920.5 L354.0 918.1 L354.4 920.5 L368.1 920.5 L368.5 918.1 L368.9 920.5 L370.6 920.5 L371.0 918.1 L371.4 920.5 L387.1 920.5 L387.5 918.1 L387.9 920.5 L414.6 920.5 L415.0 918.1 L415.4 920.5 L417.1 920.5 L417.5 918.1 L417.9 920.5 L420.6 920.5 L421.0 918.1 L421.4 920.5 L425.6 920.5 L426.0 918.1 L426.4 920.5 L432.6 920.5 L433.0 918.1 L433.4 920.5 L439.6 920.5 L440.0 918.1 L440.4 920.5 L444.5 920.5 L447.6 913.0 L448.7 880.0 L450.2 832.5 L451.4 785.0 L452.5 747.0 L453.0 752.0 L453.5 741.0 L454.1 735.0 L454.7 729.0 L455.4 737.5 L456.0 730.0 L456.6 711.0 L457.0 762.4 L457.6 750.0 L458.2 747.0 L458.8 756.0 L459.4 759.0 L460.0 752.0 L460.6 750.5 L461.6 754.0 L462.5 785.0 L463.7 820.6 L464.9 844.0 L465.8 880.0 L467.3 911.0 L469.6 920.5 L680.4 920.5" fill="none" stroke="rgba(0,0,255,.10)" stroke-width="2.600" stroke-linejoin="round" transform="translate(0.6,0.8)"/>
<path d="M54 920.5 L122.6 920.5 L123.0 918.1 L123.4 920.5 L127.6 920.5 L128.0 918.1 L128.4 920.5 L131.1 920.5 L131.5 918.1 L131.9 920.5 L133.6 920.5 L134.0 918.1 L134.4 920.5 L136.6 920.5 L137.0 918.1 L137.4 920.5 L139.6 920.5 L140.0 918.1 L140.4 920.5 L143.6 920.5 L144.0 918.1 L144.4 920.5 L163.6 920.5 L164.0 918.1 L164.4 920.5 L168.6 920.5 L169.0 918.1 L169.4 920.5 L177.1 920.5 L177.5 918.1 L177.9 920.5 L182.1 920.5 L182.5 918.1 L182.9 920.5 L184.6 920.5 L185.0 918.1 L185.4 920.5 L192.1 920.5 L192.5 918.1 L192.9 920.5 L193.6 920.5 L194.0 918.1 L194.4 920.5 L201.1 920.5 L201.5 918.1 L201.9 920.5 L203.6 920.5 L204.0 918.1 L204.4 920.5 L206.1 920.5 L206.5 918.1 L206.9 920.5 L218.1 920.5 L218.5 918.1 L218.9 920.5 L226.1 920.5 L226.5 918.1 L226.9 920.5 L239.6 920.5 L240.0 918.1 L240.4 920.5 L247.1 920.5 L247.5 918.1 L247.9 920.5 L252.6 920.5 L253.0 918.1 L253.4 920.5 L258.1 920.5 L258.5 918.1 L258.9 920.5 L261.6 920.5 L262.0 918.1 L262.4 920.5 L263.1 920.5 L263.5 918.1 L263.9 920.5 L270.1 920.5 L270.5 918.1 L270.9 920.5 L292.6 920.5 L293.0 918.1 L293.4 920.5 L305.6 920.5 L306.0 918.1 L306.4 920.5 L311.6 920.5 L312.0 918.1 L312.4 920.5 L353.6 920.5 L354.0 918.1 L354.4 920.5 L368.1 920.5 L368.5 918.1 L368.9 920.5 L370.6 920.5 L371.0 918.1 L371.4 920.5 L387.1 920.5 L387.5 918.1 L387.9 920.5 L414.6 920.5 L415.0 918.1 L415.4 920.5 L417.1 920.5 L417.5 918.1 L417.9 920.5 L420.6 920.5 L421.0 918.1 L421.4 920.5 L425.6 920.5 L426.0 918.1 L426.4 920.5 L432.6 920.5 L433.0 918.1 L433.4 920.5 L439.6 920.5 L440.0 918.1 L440.4 920.5 L444.5 920.5 L447.6 913.0 L448.7 880.0 L450.2 832.5 L451.4 785.0 L452.5 747.0 L453.0 752.0 L453.5 741.0 L454.1 735.0 L454.7 729.0 L455.4 737.5 L456.0 730.0 L456.6 711.0 L457.0 762.4 L457.6 750.0 L458.2 747.0 L458.8 756.0 L459.4 759.0 L460.0 752.0 L460.6 750.5 L461.6 754.0 L462.5 785.0 L463.7 820.6 L464.9 844.0 L465.8 880.0 L467.3 911.0 L469.6 920.5 L680.4 920.5" fill="none" stroke="#1414ff" stroke-width="1.150" stroke-linejoin="round"/>
<path d="M54 920.2 H680.4" stroke="#1c1cf0" stroke-width="1.700"/>
<path d="M54.6 689 V921" stroke="#f03030" stroke-width="1.300"/>
<path d="M51.6 685.4 h6 l-3 8z" fill="#6f9fd0" stroke="#d03048" stroke-width="0.9"/>
<path d="M51.6 924.2 h6 l-3 -8z" fill="#6f9fd0" stroke="#d03048" stroke-width="0.9"/>
<path d="M443.3 689 V921" stroke="#ff5252" stroke-width="1.600"/>
<path d="M443.3 691 V919" stroke="#ffc4c4" stroke-width="0.600"/>
<path d="M440.3 685.4 h6 l-3 8z" fill="#6f9fd0" stroke="#d03048" stroke-width="0.9"/>
<path d="M440.3 924.2 h6 l-3 -8z" fill="#6f9fd0" stroke="#d03048" stroke-width="0.9"/>
<path d="M472.0 689 V921" stroke="#ff5252" stroke-width="1.600"/>
<path d="M472.0 691 V919" stroke="#ffc4c4" stroke-width="0.600"/>
<path d="M469.0 685.4 h6 l-3 8z" fill="#6f9fd0" stroke="#d03048" stroke-width="0.9"/>
<path d="M469.0 924.2 h6 l-3 -8z" fill="#6f9fd0" stroke="#d03048" stroke-width="0.9"/>
<path d="M680.4 689 V921" stroke="#f03030" stroke-width="1.300"/>
<path d="M677.4 685.4 h6 l-3 8z" fill="#6f9fd0" stroke="#d03048" stroke-width="0.9"/>
<path d="M677.4 924.2 h6 l-3 -8z" fill="#6f9fd0" stroke="#d03048" stroke-width="0.9"/>
<path d="M669.8 689.7 L680.8 678.8000000000001 L691.8 689.7 L680.8 700.6Z" fill="#00ff00"/>
<rect x="565.5" y="699.5" width="14" height="10" fill="#fff" stroke="#ccc" stroke-width="1"/>
<rect x="567" y="701" width="11" height="7" fill="#0000ff"/>
</svg>
<span class="lg" style="left:584px;top:697px;color:#222">nnaida12 1.6.L</span>
<span class="tk" style="left:0px;width:49px;text-align:right;top:913.5px">0</span>
<span class="tk" style="left:0px;width:49px;text-align:right;top:872.8px">20</span>
<span class="tk" style="left:0px;width:49px;text-align:right;top:831.1px">40</span>
<span class="tk" style="left:0px;width:49px;text-align:right;top:789.4px">60</span>
<span class="tk" style="left:0px;width:49px;text-align:right;top:747.7px">80</span>
<span class="tk" style="left:0px;width:49px;text-align:right;top:706.0px">100</span>
<span class="tk" style="left:24.6px;width:60px;text-align:center;top:926px">32000</span>
<span class="tk" style="left:98.6px;width:60px;text-align:center;top:926px">34000</span>
<span class="tk" style="left:172.6px;width:60px;text-align:center;top:926px">36000</span>
<span class="tk" style="left:246.6px;width:60px;text-align:center;top:926px">38000</span>
<span class="tk" style="left:320.6px;width:60px;text-align:center;top:926px">40000</span>
<span class="tk" style="left:394.6px;width:60px;text-align:center;top:926px">42000</span>
<span class="tk" style="left:468.6px;width:60px;text-align:center;top:926px">44000</span>
<span class="tk" style="left:542.6px;width:60px;text-align:center;top:926px">46000</span>
<span class="tk" style="left:616.6px;width:60px;text-align:center;top:926px">48000</span>
<svg style="left:715px;top:672px" width="703" height="269" viewBox="715 672 703 269">
<path d="M758.6 690 V920" stroke="#e2e2e2" stroke-width="1.2"/>
<path d="M832.6 690 V920" stroke="#e2e2e2" stroke-width="1.2"/>
<path d="M906.6 690 V920" stroke="#e2e2e2" stroke-width="1.2"/>
<path d="M980.6 690 V920" stroke="#e2e2e2" stroke-width="1.2"/>
<path d="M1054.6 690 V920" stroke="#e2e2e2" stroke-width="1.2"/>
<path d="M1128.6 690 V920" stroke="#e2e2e2" stroke-width="1.2"/>
<path d="M1202.6 690 V920" stroke="#e2e2e2" stroke-width="1.2"/>
<path d="M1276.6 690 V920" stroke="#e2e2e2" stroke-width="1.2"/>
<path d="M1350.6 690 V920" stroke="#e2e2e2" stroke-width="1.2"/>
<path d="M758 876.5 H1384.4" stroke="#efefef" stroke-width="2"/>
<path d="M758 832.5 H1384.4" stroke="#efefef" stroke-width="2"/>
<path d="M758 788.5 H1384.4" stroke="#efefef" stroke-width="2"/>
<path d="M758 744.5 H1384.4" stroke="#efefef" stroke-width="2"/>
<path d="M758 700.5 H1384.4" stroke="#efefef" stroke-width="2"/>
<rect x="757" y="689" width="628.4" height="232" fill="none" stroke="#848484" stroke-width="2"/>
<path d="M758 920.5 L814.6 920.5 L815.0 918.1 L815.4 920.5 L818.1 920.5 L818.5 918.1 L818.9 920.5 L824.1 920.5 L824.5 915.9 L824.9 920.5 L825.6 920.5 L826.0 918.1 L826.4 920.5 L828.1 920.5 L828.5 918.1 L828.9 920.5 L831.6 920.5 L832.0 918.1 L832.4 920.5 L832.6 920.5 L833.0 918.1 L833.4 920.5 L853.1 920.5 L853.5 918.1 L853.9 920.5 L857.6 920.5 L858.0 918.1 L858.4 920.5 L865.6 920.5 L866.0 918.1 L866.4 920.5 L869.1 920.5 L869.5 918.1 L869.9 920.5 L870.6 920.5 L871.0 918.1 L871.4 920.5 L874.1 920.5 L874.5 918.1 L874.9 920.5 L878.1 920.5 L878.5 918.1 L878.9 920.5 L880.6 920.5 L881.0 918.1 L881.4 920.5 L888.1 920.5 L888.5 918.1 L888.9 920.5 L891.6 920.5 L892.0 918.1 L892.4 920.5 L893.1 920.5 L893.5 918.1 L893.9 920.5 L904.6 920.5 L905.0 918.1 L905.4 920.5 L910.6 920.5 L911.0 918.1 L911.4 920.5 L913.1 920.5 L913.5 918.1 L913.9 920.5 L925.6 920.5 L926.0 918.1 L926.4 920.5 L931.6 920.5 L932.0 918.1 L932.4 920.5 L936.6 920.5 L937.0 918.1 L937.4 920.5 L940.1 920.5 L940.5 918.1 L940.9 920.5 L942.6 920.5 L943.0 918.1 L943.4 920.5 L945.1 920.5 L945.5 918.1 L945.9 920.5 L955.1 920.5 L955.5 918.1 L955.9 920.5 L974.1 920.5 L974.5 918.1 L974.9 920.5 L987.1 920.5 L987.5 918.1 L987.9 920.5 L993.1 920.5 L993.5 918.1 L993.9 920.5 L994.6 920.5 L995.0 918.1 L995.4 920.5 L1033.1 920.5 L1033.5 918.1 L1033.9 920.5 L1046.6 920.5 L1047.0 918.1 L1047.4 920.5 L1049.1 920.5 L1049.5 918.1 L1049.9 920.5 L1066.6 920.5 L1067.0 918.1 L1067.4 920.5 L1092.1 920.5 L1092.5 918.1 L1092.9 920.5 L1094.6 920.5 L1095.0 918.1 L1095.4 920.5 L1097.6 920.5 L1098.0 918.1 L1098.4 920.5 L1102.6 920.5 L1103.0 918.1 L1103.4 920.5 L1109.1 920.5 L1109.5 918.1 L1109.9 920.5 L1111.6 920.5 L1112.0 918.1 L1112.4 920.5 L1116.6 920.5 L1117.0 918.1 L1117.4 920.5 L1124.5 920.5 L1126.6 911.0 L1128.0 880.0 L1129.2 844.0 L1130.4 797.0 L1131.4 761.0 L1132.5 732.8 L1133.2 716.0 L1133.7 722.0 L1134.7 709.5 L1135.2 728.0 L1135.6 735.0 L1136.2 728.0 L1136.8 732.8 L1137.4 740.0 L1138.0 737.5 L1139.0 744.6 L1139.6 736.0 L1140.1 731.6 L1140.9 751.8 L1142.0 785.0 L1143.2 818.0 L1144.4 851.5 L1145.6 892.0 L1147.0 913.0 L1149.4 920.5 L1384.4 920.5" fill="none" stroke="rgba(0,0,255,.10)" stroke-width="2.600" stroke-linejoin="round" transform="translate(0.6,0.8)"/>
<path d="M758 920.5 L814.6 920.5 L815.0 918.1 L815.4 920.5 L818.1 920.5 L818.5 918.1 L818.9 920.5 L824.1 920.5 L824.5 915.9 L824.9 920.5 L825.6 920.5 L826.0 918.1 L826.4 920.5 L828.1 920.5 L828.5 918.1 L828.9 920.5 L831.6 920.5 L832.0 918.1 L832.4 920.5 L832.6 920.5 L833.0 918.1 L833.4 920.5 L853.1 920.5 L853.5 918.1 L853.9 920.5 L857.6 920.5 L858.0 918.1 L858.4 920.5 L865.6 920.5 L866.0 918.1 L866.4 920.5 L869.1 920.5 L869.5 918.1 L869.9 920.5 L870.6 920.5 L871.0 918.1 L871.4 920.5 L874.1 920.5 L874.5 918.1 L874.9 920.5 L878.1 920.5 L878.5 918.1 L878.9 920.5 L880.6 920.5 L881.0 918.1 L881.4 920.5 L888.1 920.5 L888.5 918.1 L888.9 920.5 L891.6 920.5 L892.0 918.1 L892.4 920.5 L893.1 920.5 L893.5 918.1 L893.9 920.5 L904.6 920.5 L905.0 918.1 L905.4 920.5 L910.6 920.5 L911.0 918.1 L911.4 920.5 L913.1 920.5 L913.5 918.1 L913.9 920.5 L925.6 920.5 L926.0 918.1 L926.4 920.5 L931.6 920.5 L932.0 918.1 L932.4 920.5 L936.6 920.5 L937.0 918.1 L937.4 920.5 L940.1 920.5 L940.5 918.1 L940.9 920.5 L942.6 920.5 L943.0 918.1 L943.4 920.5 L945.1 920.5 L945.5 918.1 L945.9 920.5 L955.1 920.5 L955.5 918.1 L955.9 920.5 L974.1 920.5 L974.5 918.1 L974.9 920.5 L987.1 920.5 L987.5 918.1 L987.9 920.5 L993.1 920.5 L993.5 918.1 L993.9 920.5 L994.6 920.5 L995.0 918.1 L995.4 920.5 L1033.1 920.5 L1033.5 918.1 L1033.9 920.5 L1046.6 920.5 L1047.0 918.1 L1047.4 920.5 L1049.1 920.5 L1049.5 918.1 L1049.9 920.5 L1066.6 920.5 L1067.0 918.1 L1067.4 920.5 L1092.1 920.5 L1092.5 918.1 L1092.9 920.5 L1094.6 920.5 L1095.0 918.1 L1095.4 920.5 L1097.6 920.5 L1098.0 918.1 L1098.4 920.5 L1102.6 920.5 L1103.0 918.1 L1103.4 920.5 L1109.1 920.5 L1109.5 918.1 L1109.9 920.5 L1111.6 920.5 L1112.0 918.1 L1112.4 920.5 L1116.6 920.5 L1117.0 918.1 L1117.4 920.5 L1124.5 920.5 L1126.6 911.0 L1128.0 880.0 L1129.2 844.0 L1130.4 797.0 L1131.4 761.0 L1132.5 732.8 L1133.2 716.0 L1133.7 722.0 L1134.7 709.5 L1135.2 728.0 L1135.6 735.0 L1136.2 728.0 L1136.8 732.8 L1137.4 740.0 L1138.0 737.5 L1139.0 744.6 L1139.6 736.0 L1140.1 731.6 L1140.9 751.8 L1142.0 785.0 L1143.2 818.0 L1144.4 851.5 L1145.6 892.0 L1147.0 913.0 L1149.4 920.5 L1384.4 920.5" fill="none" stroke="#1414ff" stroke-width="1.150" stroke-linejoin="round"/>
<path d="M758 920.9 H1384.4" stroke="#4545ea" stroke-width="2.300"/>
<path d="M758.6 689 V921" stroke="#f03030" stroke-width="1.300"/>
<path d="M755.6 685.4 h6 l-3 8z" fill="#6f9fd0" stroke="#d03048" stroke-width="0.9"/>
<path d="M755.6 924.2 h6 l-3 -8z" fill="#6f9fd0" stroke="#d03048" stroke-width="0.9"/>
<path d="M1147.3 689 V921" stroke="#ff5252" stroke-width="1.600"/>
<path d="M1147.3 691 V919" stroke="#ffc4c4" stroke-width="0.600"/>
<path d="M1144.3 685.4 h6 l-3 8z" fill="#6f9fd0" stroke="#d03048" stroke-width="0.9"/>
<path d="M1144.3 924.2 h6 l-3 -8z" fill="#6f9fd0" stroke="#d03048" stroke-width="0.9"/>
<path d="M1176.0 689 V921" stroke="#ff5252" stroke-width="1.600"/>
<path d="M1176.0 691 V919" stroke="#ffc4c4" stroke-width="0.600"/>
<path d="M1173.0 685.4 h6 l-3 8z" fill="#6f9fd0" stroke="#d03048" stroke-width="0.9"/>
<path d="M1173.0 924.2 h6 l-3 -8z" fill="#6f9fd0" stroke="#d03048" stroke-width="0.9"/>
<path d="M1384.4 689 V921" stroke="#f03030" stroke-width="1.300"/>
<path d="M1381.4 685.4 h6 l-3 8z" fill="#6f9fd0" stroke="#d03048" stroke-width="0.9"/>
<path d="M1381.4 924.2 h6 l-3 -8z" fill="#6f9fd0" stroke="#d03048" stroke-width="0.9"/>
<path d="M1373.8 689.7 L1384.8 678.8000000000001 L1395.8 689.7 L1384.8 700.6Z" fill="#ff0000"/>
<rect x="1269.5" y="699.5" width="14" height="10" fill="#fff" stroke="#ccc" stroke-width="1"/>
<rect x="1271" y="701" width="11" height="7" fill="#0000ff"/>
</svg>
<span class="lg" style="left:1288px;top:697px;color:#8a8a8a">nnaida12 1.7.L</span>
<span class="tk" style="left:704px;width:49px;text-align:right;top:913.5px">0</span>
<span class="tk" style="left:704px;width:49px;text-align:right;top:870.5px">20</span>
<span class="tk" style="left:704px;width:49px;text-align:right;top:826.5px">40</span>
<span class="tk" style="left:704px;width:49px;text-align:right;top:782.5px">60</span>
<span class="tk" style="left:704px;width:49px;text-align:right;top:738.5px">80</span>
<span class="tk" style="left:704px;width:49px;text-align:right;top:694.5px">100</span>
<span class="tk" style="left:728.6px;width:60px;text-align:center;top:926px">32000</span>
<span class="tk" style="left:802.6px;width:60px;text-align:center;top:926px">34000</span>
<span class="tk" style="left:876.6px;width:60px;text-align:center;top:926px">36000</span>
<span class="tk" style="left:950.6px;width:60px;text-align:center;top:926px">38000</span>
<span class="tk" style="left:1024.6px;width:60px;text-align:center;top:926px">40000</span>
<span class="tk" style="left:1098.6px;width:60px;text-align:center;top:926px">42000</span>
<span class="tk" style="left:1172.6px;width:60px;text-align:center;top:926px">44000</span>
<span class="tk" style="left:1246.6px;width:60px;text-align:center;top:926px">46000</span>
<span class="tk" style="left:1320.6px;width:60px;text-align:center;top:926px">48000</span>
<span class="ml" style="left:446px;top:424px;">42507 (0)</span>
<span class="ml" style="left:474px;top:442px;">43282 (0)</span>
<span class="ml" style="left:761px;top:424px;">31985 (0)</span>
<span class="ml" style="left:1150px;top:460px;">42507 (69)</span>
<span class="ml" style="left:1179px;top:478px;">43282 (0)</span>
<span class="ml" style="left:1387px;top:442px;">48930</span>
<span class="ml" style="left:1387px;top:456px;width:35px;text-align:center">(0)</span>
<span class="ml" style="left:57px;top:695px;">31985 (0)</span>
<span class="ml" style="left:446px;top:730px;">42507 (0)</span>
<span class="ml" style="left:474px;top:748px;">43282 (0)</span>
<span class="ml" style="left:683px;top:712px;">48930</span>
<span class="ml" style="left:683px;top:726px;width:35px;text-align:center">(0)</span>
<span class="ml" style="left:761px;top:695px;">31985 (0)</span>
<span class="ml" style="left:1150px;top:730px;">42507 (0)</span>
<span class="ml" style="left:1179px;top:748px;">43282 (0)</span>
<span class="ml" style="left:1387px;top:712px;">48930</span>
<span class="ml" style="left:1387px;top:726px;width:35px;text-align:center">(0)</span>
<svg style="left:1318px;top:134px" width="104" height="62" viewBox="1318 134 104 62">
<rect x="1320" y="136" width="57" height="57.500" fill="#f6c200"/>
<circle cx="1328.400" cy="141.800" r="5.200" fill="#1d2f6f"/><path d="M1324.800 144.200 L1328.400 138.600 L1332 144.200Z" fill="#e8eef8"/>
<path d="M1363.600 137 h7.200 v5.600 c0 2.600 -1.800 4 -3.600 5 c-1.800 -1 -3.600 -2.400 -3.600 -5z" fill="#2740a8"/><path d="M1365 138.600 h4.400 M1365 141 h4.400 M1367.200 137.600 v8" stroke="#e8eef8" stroke-width="0.900"/>
<text x="1322.600" y="168.400" font-family="'DejaVu Serif','Liberation Serif',serif" font-weight="bold" font-size="26.500" fill="#0a0a0a" textLength="24.500" lengthAdjust="spacingAndGlyphs">M</text>
<text x="1347" y="167.200" font-family="'DejaVu Sans','Liberation Sans',sans-serif" font-weight="bold" font-size="13" fill="#0a0a0a" textLength="28.500" lengthAdjust="spacingAndGlyphs">idas</text>
<text x="1323.800" y="178.200" font-family="'DejaVu Serif','Liberation Serif',serif" font-weight="bold" font-size="3.800" fill="#1a1a1a" textLength="18" lengthAdjust="spacingAndGlyphs">powered by</text>
<rect x="1349" y="172" width="13" height="19" fill="#d8340c" transform="rotate(2 1355 181)"/>
<path d="M1356.600 174.500 c-2.600 3 -2.800 8 -1.400 12.500 c1.800 -3.400 2.600 -8.600 1.400 -12.500z" fill="#2a50c8"/>
<rect x="1350.500" y="187.300" width="9.500" height="1.600" fill="#e9b0a0"/>
<!-- tcl powered -->
<path d="M1417 146.500 L1419.600 147 L1418 163 L1416.800 163Z" fill="#2a48b8"/>
<path d="M1383.600 184 L1415.800 185.500 L1415.200 193.800 L1383 191.600Z" fill="#2243b4"/>
<path d="M1385.900 137 L1417.800 138 L1417 185.200 L1385.600 184.200Z" fill="#d23a0c"/>
<path d="M1404.800 141.200 c-3.400 0.600 -6.400 4.600 -7.600 11.600 c-1.200 7 -1 16 0.600 24.400 c0.400 2 1 3.600 1.800 4.800 l1.400 -0.200 c-0.600 -3.600 -0.400 -8 0.200 -12.400 c0.800 -5.600 2.400 -10.400 3.400 -14.400 c0.600 -2.600 0.800 -4.600 0.600 -6.400 l1.600 -1.400 l-1.800 -0.400 c0.200 -2.200 0.200 -4 -0.200 -5.600z" fill="#2450c8"/>
<path d="M1402.200 146 c-2.600 8 -3.200 20 -1.800 34" fill="none" stroke="#c6d2f4" stroke-width="0.800"/>
<path d="M1392.400 139 c1.400 2.800 1.800 5.600 1.400 9.400 M1395.600 138.400 c1.200 2.200 1.600 4.400 1.200 7.200 M1410.800 146.400 c-0.800 2 -1 3.800 -0.800 6.200 M1413.600 146 c-0.600 1.600 -0.800 3.200 -0.600 5" fill="none" stroke="#f0b800" stroke-width="1.100"/>
<text x="1387.400" y="181.800" font-family="'DejaVu Sans','Liberation Sans',sans-serif" font-weight="bold" font-size="6" fill="#f4ece4" textLength="11.500" lengthAdjust="spacingAndGlyphs">TCL</text>
<text x="1387.800" y="191" font-family="'DejaVu Sans','Liberation Sans',sans-serif" font-weight="bold" font-size="6.400" fill="#f5e23a" textLength="25.500" lengthAdjust="spacingAndGlyphs" transform="rotate(1.500 1400 188)">POWERED</text>
</svg>
<div style="left:0;top:26px;width:2px;height:985px;background:#0c0c0c"></div>
<div style="left:1442px;top:26px;width:2px;height:985px;background:#0c0c0c"></div>
<div style="left:0;top:1009px;width:1444px;height:2px;background:#0c0c0c"></div>
</div>
</body>
</html>
